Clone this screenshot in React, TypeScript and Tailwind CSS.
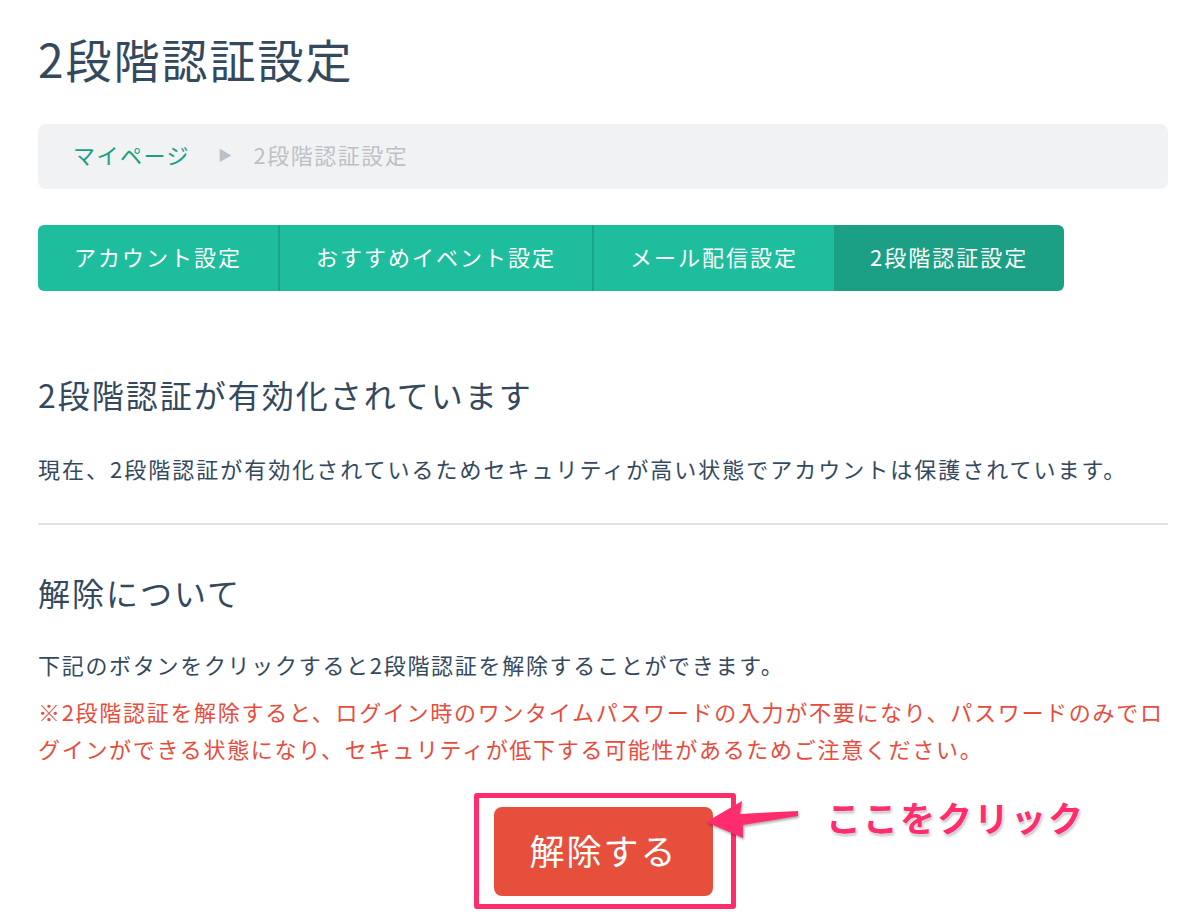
import React from 'react';

const FONT = '"Noto Sans CJK JP", "Noto Sans", sans-serif';

const TABS = [
  { label: 'アカウント設定', active: false },
  { label: 'おすすめイベント設定', active: false },
  { label: 'メール配信設定', active: false },
  { label: '2段階認証設定', active: true },
];

function Breadcrumb() {
  return (
    <div className="mt-[30px] flex h-[65px] items-center rounded-lg bg-[#f1f2f4] pb-[4px] pl-[35px] text-[22px] tracking-[1.5px]">
      <span className="text-[#17a084]">マイページ</span>
      <span className="ml-[28px] mr-[20px] text-[14px] text-[#bcc1c5]">▶</span>
      <span className="text-[#bdc1c5]">2段階認証設定</span>
    </div>
  );
}

function SettingTabs() {
  return (
    <div className="mt-[36px] flex">
      <div className="flex h-[66px] overflow-hidden rounded-md">
        {TABS.map((tab, i) => (
          <div
            key={tab.label}
            className={
              'flex items-center px-[36px] pb-[4px] text-[22px] tracking-[2px] text-white ' +
              (tab.active ? 'bg-[#1ba085]' : 'bg-[#1ebd9d]') +
              (i < 2 ? ' border-r-2 border-[#19a489]' : '')
            }
          >
            {tab.label}
          </div>
        ))}
      </div>
    </div>
  );
}

function ClickHint() {
  return (
    <>
      <svg
        className="absolute left-[226px] top-[1px] drop-shadow-[1px_2px_1px_rgba(0,0,0,0.3)]"
        width="105"
        height="50"
        viewBox="0 0 105 50"
      >
        <polygon points="6,28 42,7 40,20 98,17 98,22 43,31 43,44" fill="#ff2d6e" />
      </svg>
      <span className="absolute left-[352px] top-[0px] whitespace-nowrap text-[35px] font-bold leading-[48px] tracking-[2px] text-[#ff2d6e] [text-shadow:0_0_2px_#fff,0_0_3px_#fff,1px_2px_3px_rgba(0,0,0,0.35)]">
        ここをクリック
      </span>
    </>
  );
}

export default function App() {
  return (
    <div className="min-h-[922px] bg-white text-[#34495e]" style={{ fontFamily: FONT }}>
      <div className="ml-[38px] w-[1130px] pt-[22px]">
        <h1 className="text-[46px] leading-[72px] tracking-[2px]">2段階認証設定</h1>

        <Breadcrumb />
        <SettingTabs />

        <h2 className="mt-[79px] text-[32px] leading-[48px] tracking-[2px]">2段階認証が有効化されています</h2>
        <p className="mt-[32px] text-[22px] leading-[36px] tracking-[2px]">
          現在、2段階認証が有効化されているためセキュリティが高い状態でアカウントは保護されています。
        </p>

        <hr className="mt-[37px] border-t-2 border-[#e2e2e2]" />

        <h2 className="mt-[43px] text-[32px] leading-[48px] tracking-[2px]">解除について</h2>
        <p className="mt-[30px] text-[22px] leading-[36px] tracking-[1.7px]">
          下記のボタンをクリックすると2段階認証を解除することができます。
        </p>
        <p className="mt-[11px] text-[22px] leading-[37px] tracking-[1.7px] text-[#e74c3c]">
          ※2段階認証を解除すると、ログイン時のワンタイムパスワードの入力が不要になり、パスワードのみでログインができる状態になり、セキュリティが低下する可能性があるためご注意ください。
        </p>

        <div className="relative ml-[436px] mt-[26px] w-[262px]">
          <div className="h-[116px] rounded-[3px] border-[5px] border-[#ff2d6e] pl-[15px] pt-[9px]">
            <button className="flex h-[89px] w-[219px] items-center justify-center rounded-lg bg-[#e74f3d] pb-[2px] text-[35px] tracking-[2px] text-white">
              解除する
            </button>
          </div>
          <ClickHint />
        </div>
      </div>
    </div>
  );
}
